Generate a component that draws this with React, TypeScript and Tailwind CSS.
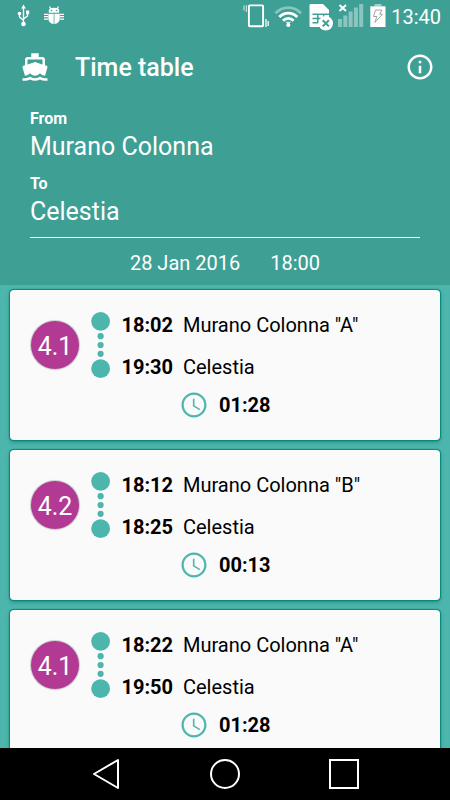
type Trip = {
  line: string;
  departure: string;
  arrival: string;
  from: string;
  to: string;
  duration: string;
};

const trips: Trip[] = [
  { line: "4.1", departure: "18:02", arrival: "19:30", from: 'Murano Colonna "A"', to: "Celestia", duration: "01:28" },
  { line: "4.2", departure: "18:12", arrival: "18:25", from: 'Murano Colonna "B"', to: "Celestia", duration: "00:13" },
  { line: "4.1", departure: "18:22", arrival: "19:50", from: 'Murano Colonna "A"', to: "Celestia", duration: "01:28" },
];

function StatusBar() {
  return (
    <div className="flex h-8 items-start pl-[17px] pr-[9px] text-white">
      {/* USB */}
      <svg width="14" height="32" viewBox="17 0 14 32" fill="none" stroke="currentColor" strokeWidth="1.4" className="shrink-0">
        <path d="M23.5 8v16M19.5 14v3l4 3.5M27.5 13v3l-4 3" />
        <path d="M23.5 4.5l2.3 4h-4.6z" fill="currentColor" stroke="none" />
        <circle cx="19.5" cy="13.5" r="1.8" fill="currentColor" stroke="none" />
        <path d="M26 10.5h3.2v3.6H26z" fill="currentColor" stroke="none" />
        <circle cx="23.5" cy="24" r="2.3" fill="currentColor" stroke="none" />
      </svg>
      {/* Debugging bug */}
      <svg width="20" height="32" viewBox="44 0 20 32" className="ml-[13px] shrink-0">
        <g fill="currentColor">
          <path d="M48.8 12.8V10.500c0-2 2-2.700 5.200-2.700s5.200.7 5.200 2.700v2.300z" />
          <path d="M48.300 13.700h5.400v10.300c-3.400-.4-5.400-2.500-5.400-5.800zM54.400 13.700h5.400v4.500c0 3.300-2 5.400-5.400 5.800z" />
        </g>
        <path d="M49.500 6.500l1.500 2.500M58.500 6.500l-1.500 2.500M44 14.300h4M44 16.700h4M44 19.100h4M60 14.300h4M60 16.700h4M60 19.100h4" stroke="currentColor" strokeWidth="1.200" />
        <circle cx="51.500" cy="10.500" r=".8" fill="#3e9f95" />
        <circle cx="56.500" cy="10.500" r=".8" fill="#3e9f95" />
      </svg>
      {/* Vibrate */}
      <svg width="27" height="32" viewBox="244 0 27 32" fill="none" stroke="currentColor" className="ml-auto shrink-0">
        <rect x="249.900" y="5.400" width="14.200" height="20.800" rx=".8" strokeWidth="1.900" />
        <path d="M245 5.500v5M247.300 5v7" strokeWidth="1" opacity=".8" />
        <path d="M267 19v8M269.200 21v5" strokeWidth="1.600" opacity=".8" />
      </svg>
      {/* Wifi */}
      <svg width="28" height="32" viewBox="274 0 28 32" fill="none" stroke="currentColor" strokeWidth="2.800" className="ml-1 shrink-0">
        <path d="M275.500 13.300c7-7.500 18.500-7.500 25.500 0" opacity=".4" />
        <path d="M279.300 17c5-5.300 13-5.300 18 0" />
        <path d="M283 20.700c3-3 7.600-3 10.600 0" />
        <path d="M285.500 21.700h5.600l-2.800 3z" fill="currentColor" stroke="none" opacity=".8" />
        <circle cx="288.300" cy="25" r="2.100" fill="currentColor" stroke="none" />
      </svg>
      {/* Missing SIM */}
      <svg width="25" height="32" viewBox="309 0 25 32" className="ml-[7px] shrink-0">
        <path d="M311 4h12l6 6v17h-18c-1 0-1.500-.5-1.500-1.500v-20c0-1 .5-1.500 1.500-1.500z" fill="currentColor" />
        <path d="M312.500 14.300h5M318.500 14.300h5M324.500 14.300h4.500M312.500 18.500h5M318.500 18.500h3M312.500 22.700h5M317.800 13.500v10M323.700 13.500v4" stroke="#3e9f95" strokeWidth="1.500" fill="none" />
        <circle cx="325.800" cy="23.300" r="7.200" fill="currentColor" />
        <path d="M322.700 20.200l6.200 6.200M328.900 20.200l-6.200 6.200" stroke="#3e9f95" strokeWidth="2" />
      </svg>
      {/* No signal */}
      <svg width="26" height="32" viewBox="338 0 26 32" className="ml-1 shrink-0">
        <path d="M338 19h4v8h-4zM343.300 15.500h4V27h-4zM348.600 11.500h4V27h-4zM353.900 7.500h4V27h-4zM359.200 4h4v23h-4z" fill="currentColor" opacity=".4" />
        <path d="M339.500 5l6.500 6M346 5l-6.500 6" stroke="currentColor" strokeWidth="2" />
      </svg>
      {/* Charging battery */}
      <svg width="16" height="32" viewBox="370 0 16 32" className="ml-[6px] shrink-0">
        <path d="M374.500 4h7v2.500h-7z" fill="currentColor" opacity=".5" />
        <path d="M370.300 6.300h15.200V27h-15.200z" fill="currentColor" />
        <path d="M375.500 10h6.500l-2.400 4.200h3l-7.800 8.300 2-6h-3.300z" fill="none" stroke="#999" strokeWidth=".9" />
      </svg>
      <span className="ml-[5px] text-[20px] leading-[34px]">13:40</span>
    </div>
  );
}

function Header() {
  return (
    <header className="h-[285px] shrink-0 bg-[#3e9f95] text-white">
      <StatusBar />
      <div className="flex h-[69px] items-center pl-5 pr-[15px]">
        <svg width="30" height="30" viewBox="0 0 24 24" fill="currentColor">
          <path d="M20 21c-1.390 0-2.780-.47-4-1.320-2.440 1.710-5.560 1.710-8 0C6.780 20.530 5.390 21 4 21H2v2h2c1.380 0 2.740-.35 4-.99 2.520 1.290 5.480 1.290 8 0 1.260.65 2.620.99 4 .99h2v-2h-2zM3.950 19H4c1.600 0 3.020-.88 4-2 .98 1.120 2.400 2 4 2s3.020-.88 4-2c.98 1.120 2.400 2 4 2h.05l1.890-6.680c.08-.26.060-.54-.06-.78s-.34-.42-.6-.5L20 10.620V6c0-1.100-.9-2-2-2h-3V1H9v3H6c-1.100 0-2 .9-2 2v4.620l-1.290.42c-.26.08-.48.26-.6.5s-.15.520-.06.780L3.950 19zM6 6h12v3.970L12 8 6 9.970V6z" />
        </svg>
        <h1 className="ml-[25px] pt-[2px] text-[25px] font-medium leading-8">Time table</h1>
        <svg width="30" height="30" viewBox="0 0 24 24" fill="currentColor" className="ml-auto">
          <path d="M11 17h2v-6h-2v6zm1-15C6.480 2 2 6.480 2 12s4.480 10 10 10 10-4.480 10-10S17.520 2 12 2zm0 18c-4.410 0-8-3.590-8-8s3.590-8 8-8 8 3.590 8 8-3.590 8-8 8zM11 9h2V7h-2v2z" />
        </svg>
      </div>
      <div className="mx-[30px] h-[137px] border-b border-white pt-2">
        <div className="text-[16px] font-bold leading-5">From</div>
        <div className="text-[25px] leading-9">Murano Colonna</div>
        <div className="mt-[9px] text-[16px] font-bold leading-5">To</div>
        <div className="text-[25px] leading-9">Celestia</div>
      </div>
      <div className="flex justify-center gap-[30px] pt-3 text-[20px] leading-[26px]">
        <span>28 Jan 2016</span>
        <span>18:00</span>
      </div>
    </header>
  );
}

function TripCard({ trip }: { trip: Trip }) {
  return (
    <article className="flex h-[150px] shrink-0 rounded-[4px] bg-[#fafafa] pl-[21px] text-black shadow-[0_0_1px_0.5px_#00897b,0_2px_4px_0_rgba(0,80,70,0.45)]">
      <div className="mt-[31px] flex size-12 items-center justify-center rounded-full bg-[#b23a94] pt-[3px] text-[25px] text-white shadow-[0_0_1px_1px_rgba(0,0,0,0.2)]">
        {trip.line}
      </div>
      <svg width="20" height="68" viewBox="0 0 20 68" fill="#4db6ac" className="ml-3 mt-[21px]">
        <circle cx="9.600" cy="10.300" r="9.400" />
        <circle cx="9.600" cy="25.200" r="3.100" />
        <circle cx="9.600" cy="34" r="3.100" />
        <circle cx="9.600" cy="42.800" r="3.100" />
        <circle cx="9.600" cy="57.700" r="9.400" />
      </svg>
      <div className="ml-[10.500px] pt-[21px] text-[20px] leading-7">
        <div className="flex gap-[10px]">
          <span className="w-[51.500px] font-bold">{trip.departure}</span>
          <span>{trip.from}</span>
        </div>
        <div className="mt-[14px] flex gap-[10px]">
          <span className="w-[51.500px] font-bold">{trip.arrival}</span>
          <span>{trip.to}</span>
        </div>
        <div className="ml-[57.500px] mt-[9px] flex items-center gap-[10px]">
          <svg width="30" height="30" viewBox="0 0 24 24" fill="#4db6ac">
            <path d="M11.990 2C6.470 2 2 6.480 2 12s4.470 10 9.990 10C17.520 22 22 17.520 22 12S17.520 2 11.990 2zM12 20.200c-4.530 0-8.200-3.670-8.200-8.200S7.470 3.800 12 3.800s8.200 3.670 8.200 8.200-3.670 8.200-8.200 8.200z" />
            <path d="M12.400 7h-1.300v6l5.250 3.150.65-1.050-4.600-2.800z" />
          </svg>
          <span className="font-bold">{trip.duration}</span>
        </div>
      </div>
    </article>
  );
}

function NavigationBar() {
  return (
    <nav className="flex h-[52px] shrink-0 items-center bg-black pl-[92px] text-white">
      <svg width="28" height="32" viewBox="0 0 28 32" fill="none" stroke="currentColor" strokeWidth="2">
        <path d="M26 2v28L2 16z" strokeLinejoin="round" />
      </svg>
      <svg width="32" height="32" viewBox="0 0 32 32" fill="none" stroke="currentColor" strokeWidth="2" className="ml-[89px]">
        <circle cx="16" cy="16" r="14" />
      </svg>
      <svg width="32" height="32" viewBox="0 0 32 32" fill="none" stroke="currentColor" strokeWidth="2" className="ml-[87px]">
        <rect x="2" y="2" width="28" height="28" />
      </svg>
    </nav>
  );
}

export default function App() {
  return (
    <div className="flex h-[800px] w-[450px] flex-col overflow-hidden bg-[#4db6ac] font-[Roboto,sans-serif]">
      <Header />
      <main className="flex min-h-0 flex-1 flex-col gap-[10px] overflow-hidden px-[10px] pt-[5px]">
        {trips.map((trip) => (
          <TripCard key={trip.departure} trip={trip} />
        ))}
      </main>
      <NavigationBar />
    </div>
  );
}
